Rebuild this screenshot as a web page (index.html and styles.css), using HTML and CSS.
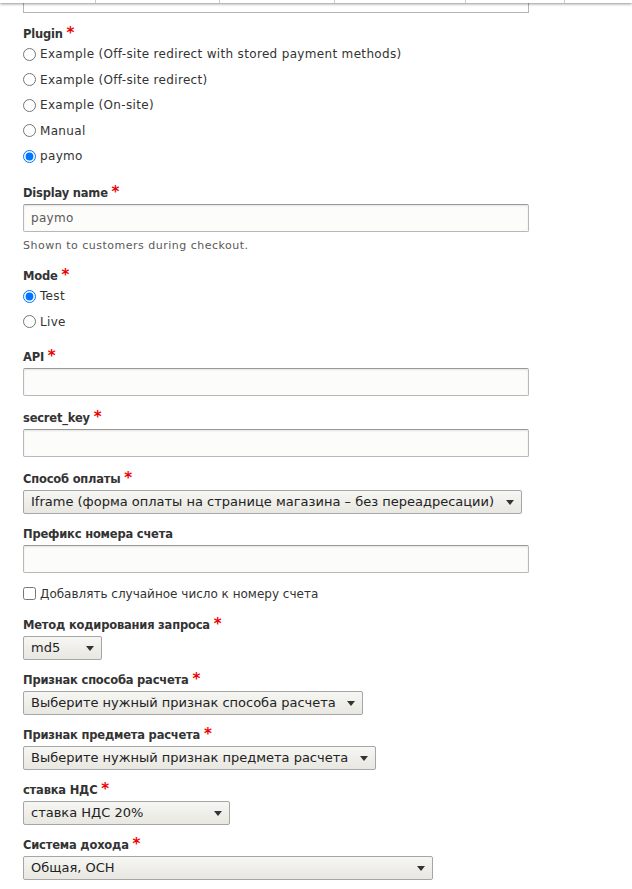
FILE: index.html
```html
<!DOCTYPE html>
<html>
<head>
	<meta charset="UTF-8" />
	<title>Payment gateway</title>
	<link rel="stylesheet" href="styles.css">
</head>
<body>
	<!-- sticky table header that floats over the form while scrolling -->
	<div class="sticky-header">
		<span class="cell c1"></span><span class="cell c2"></span><span class="cell c3"></span><span class="cell c4"></span><span class="cell c5"></span><span class="cell c6"></span>
	</div>
	<form class="gateway-form">
		<div class="conditions-box"></div>

		<div class="form-item form-radios">
			<label class="label">Plugin <span class="required">*</span></label>
			<div class="option"><input type="radio" name="plugin" id="p1"><label for="p1">Example (Off-site redirect with stored payment methods)</label></div>
			<div class="option"><input type="radio" name="plugin" id="p2"><label for="p2">Example (Off-site redirect)</label></div>
			<div class="option"><input type="radio" name="plugin" id="p3"><label for="p3">Example (On-site)</label></div>
			<div class="option"><input type="radio" name="plugin" id="p4"><label for="p4">Manual</label></div>
			<div class="option"><input type="radio" name="plugin" id="p5" checked><label for="p5">paymo</label></div>
		</div>

		<div class="form-item">
			<label class="label" for="label">Display name <span class="required">*</span></label>
			<input class="form-text" type="text" id="label" value="paymo">
			<div class="description">Shown to customers during checkout.</div>
		</div>

		<div class="form-item form-radios mode">
			<label class="label">Mode <span class="required">*</span></label>
			<div class="option"><input type="radio" name="mode" id="m1" checked><label for="m1">Test</label></div>
			<div class="option"><input type="radio" name="mode" id="m2"><label for="m2">Live</label></div>
		</div>

		<div class="form-item">
			<label class="label" for="api">API <span class="required">*</span></label>
			<input class="form-text" type="text" id="api">
		</div>

		<div class="form-item">
			<label class="label" for="secret">secret_key <span class="required">*</span></label>
			<input class="form-text" type="text" id="secret">
		</div>

		<div class="form-item form-type-select">
			<label class="label" for="method">Способ оплаты <span class="required">*</span></label>
			<div class="select-wrap"><select class="form-select" id="method">
				<option>Iframe (форма оплаты на странице магазина – без переадресации)</option>
			</select></div>
		</div>

		<div class="form-item prefix">
			<label class="label" for="prefix">Префикс номера счета</label>
			<input class="form-text" type="text" id="prefix">
		</div>

		<div class="form-item form-checkbox">
			<div class="option"><input type="checkbox" id="rand"><label for="rand">Добавлять случайное число к номеру счета</label></div>
		</div>

		<div class="form-item form-type-select">
			<label class="label" for="hash">Метод кодирования запроса <span class="required">*</span></label>
			<div class="select-wrap"><select class="form-select hash" id="hash">
				<option>md5</option>
			</select></div>
		</div>

		<div class="form-item form-type-select">
			<label class="label" for="pmethod">Признак способа расчета <span class="required">*</span></label>
			<div class="select-wrap"><select class="form-select" id="pmethod">
				<option>Выберите нужный признак способа расчета</option>
			</select></div>
		</div>

		<div class="form-item form-type-select">
			<label class="label" for="pobject">Признак предмета расчета <span class="required">*</span></label>
			<div class="select-wrap"><select class="form-select" id="pobject">
				<option>Выберите нужный признак предмета расчета</option>
			</select></div>
		</div>

		<div class="form-item form-type-select">
			<label class="label" for="vat">ставка НДС <span class="required">*</span></label>
			<div class="select-wrap"><select class="form-select vat" id="vat">
				<option>ставка НДС 20%</option>
			</select></div>
		</div>

		<div class="form-item form-type-select">
			<label class="label" for="tax">Система дохода <span class="required">*</span></label>
			<div class="select-wrap"><select class="form-select tax" id="tax">
				<option>Общая, ОСН</option>
			</select></div>
		</div>
	</form>
</body>
</html>
```

FILE: styles.css
```css
body {
	margin: 0;
	font-family: "DejaVu Sans", "Liberation Sans", sans-serif;
	font-size: 12px;
	color: #333;
	background: #fff;
}
.sticky-header {
	position: fixed;
	left: 0;
	top: 0;
	right: 0;
	height: 3px;
	display: flex;
	background: #fff;
	box-shadow: 0 1px 3px rgba(0,0,0,0.45);
	z-index: 2;
}
.cell {
	height: 100%;
	border-right: 1px solid #ccc;
}
.c1 { width: 95px; }
.c2 { width: 123px; }
.c3 { width: 114px; }
.c4 { width: 130px; }
.c5 { width: 98px; }
.c6 { flex: 1; border-right: 0; }
.gateway-form {
	padding: 0 23px;
}
.conditions-box {
	width: 504px;
	height: 12px;
	border: 1px solid #b4b4b4;
	border-top: 0;
	margin-bottom: 10px;
}
.form-item {
	margin: 0 0 11px;
}
.label {
	display: block;
	font-weight: bold;
	font-size: 11.5px;
	letter-spacing: -0.2px;
	line-height: 18px;
	padding-top: 2px;
	margin-bottom: 2px;
}
.required {
	color: #e00;
	font-size: 15px;
	line-height: 10px;
	letter-spacing: 0;
	vertical-align: top;
	position: relative;
	top: 3px;
}
.form-radios {
	margin-bottom: 17px;
}
.form-radios.mode {
	margin-bottom: 15px;
}
.form-radios .option label {
	letter-spacing: 0.33px;
}
.option {
	display: flex;
	align-items: center;
	line-height: 18px;
	margin-top: 7.5px;
}
.label + .option {
	margin-top: 0;
}
.mode .label + .option {
	margin-top: 2px;
}
.option input {
	margin: 0 4px 0 0;
	width: 13px;
	height: 13px;
}
.form-text {
	display: block;
	box-sizing: border-box;
	width: 506px;
	height: 28px;
	padding: 4px 7px;
	font: inherit;
	letter-spacing: 0.3px;
	color: #595959;
	background: #fcfcfa;
	border: 1px solid #b8b8b8;
	border-top-color: #999;
	border-radius: 2px;
	box-shadow: inset 0 1px 2px rgba(0,0,0,0.1);
}
.description {
	margin-top: 6px;
	font-size: 11px;
	letter-spacing: 0.5px;
	line-height: 16px;
	color: #595959;
}
.prefix {
	margin-bottom: 12px;
}
.form-checkbox {
	margin-bottom: 11px;
}
.form-type-select {
	margin-bottom: 9px;
}
.select-wrap {
	position: relative;
	width: fit-content;
}
.select-wrap::after {
	content: "";
	position: absolute;
	right: 8px;
	top: 10px;
	border-left: 4px solid transparent;
	border-right: 4px solid transparent;
	border-top: 5px solid #333;
	pointer-events: none;
}
.form-select {
	-webkit-appearance: none;
	appearance: none;
	display: block;
	box-sizing: border-box;
	height: 24px;
	padding: 0 26px 0 7px;
	font: inherit;
	font-size: 13px;
	color: #222;
	border: 1px solid #a6a6a6;
	border-radius: 2px;
	background: linear-gradient(to bottom, #f6f6f3, #e8e7e1);
}
.form-select.hash { width: 79px; }
.form-select.vat { width: 207px; }
.form-select.tax { width: 410px; }
```
